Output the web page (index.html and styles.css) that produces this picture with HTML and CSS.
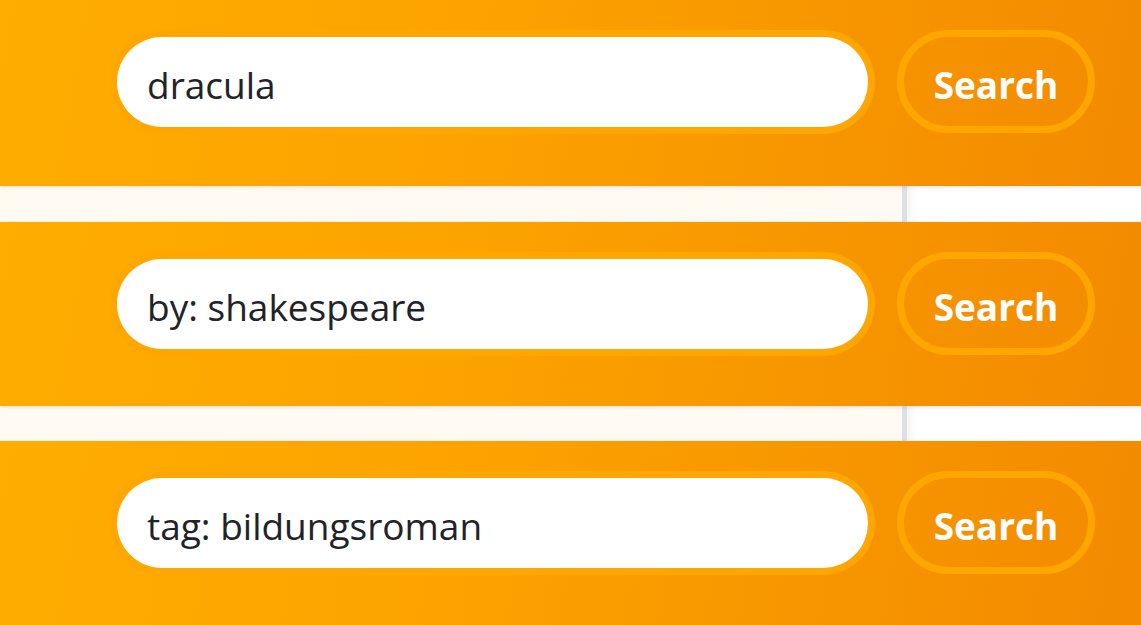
FILE: index.html
```html
<!DOCTYPE html>
<html lang="en">
<head>
<meta charset="utf-8">
<title>Search</title>
<link rel="stylesheet" href="styles.css">
</head>
<body>
<main class="stack">
  <section class="band band-first">
    <form class="search">
      <input class="field" type="text" value="dracula">
      <button class="btn" type="button">Search</button>
    </form>
  </section>
  <div class="strip strip-first"><div class="strip-main"></div><div class="strip-rule"></div><div class="strip-side"></div></div>
  <section class="band">
    <form class="search">
      <input class="field" type="text" value="by: shakespeare">
      <button class="btn" type="button">Search</button>
    </form>
  </section>
  <div class="strip"><div class="strip-main"></div><div class="strip-rule"></div><div class="strip-side"></div></div>
  <section class="band">
    <form class="search">
      <input class="field" type="text" value="tag: bildungsroman">
      <button class="btn" type="button">Search</button>
    </form>
  </section>
</main>
</body>
</html>
```

FILE: styles.css
```css
* { box-sizing: border-box; }
html, body { margin: 0; padding: 0; }
body {
  width: 1141px;
  height: 625px;
  overflow: hidden;
  background: #ffffff;
  font-family: "Open Sans", "Noto Sans", sans-serif;
}
.stack {
  display: flex;
  flex-direction: column;
}
.band {
  height: 184px;
  background: linear-gradient(100deg, #ffad00 0%, #fca300 40%, #f38a00 100%);
  padding: 30px 0 0 117px;
  position: relative;
  z-index: 1;
  box-shadow: 0 1px 4px rgba(0, 0, 0, 0.12);
}
.band-first {
  height: 186px;
}
.search {
  display: flex;
  align-items: center;
  gap: 29px;
  margin: 0;
}
.field {
  width: 751px;
  height: 90px;
  border: none;
  border-radius: 45px;
  background: #ffffff;
  box-shadow: 0 0 0 7px #ffa600;
  padding: 6px 0 0 30px;
  font-family: inherit;
  font-size: 37px;
  color: #22222a;
  outline: none;
}
.btn {
  width: 198px;
  height: 103px;
  border: 7px solid #ffa600;
  border-radius: 52px;
  background: transparent;
  color: #ffffff;
  font-family: inherit;
  font-weight: 700;
  font-size: 37px;
  padding: 5px 0 0;
}
.strip {
  height: 35px;
  display: flex;
}
.strip-first {
  height: 36px;
}
.strip-main {
  width: 902px;
  background: #fffaf2;
}
.strip-rule {
  width: 5px;
  background: #dde0e6;
}
.strip-side {
  flex: 1;
  background: #ffffff;
  box-shadow: inset 8px 0 12px -6px rgba(0, 0, 0, 0.06);
}
```
